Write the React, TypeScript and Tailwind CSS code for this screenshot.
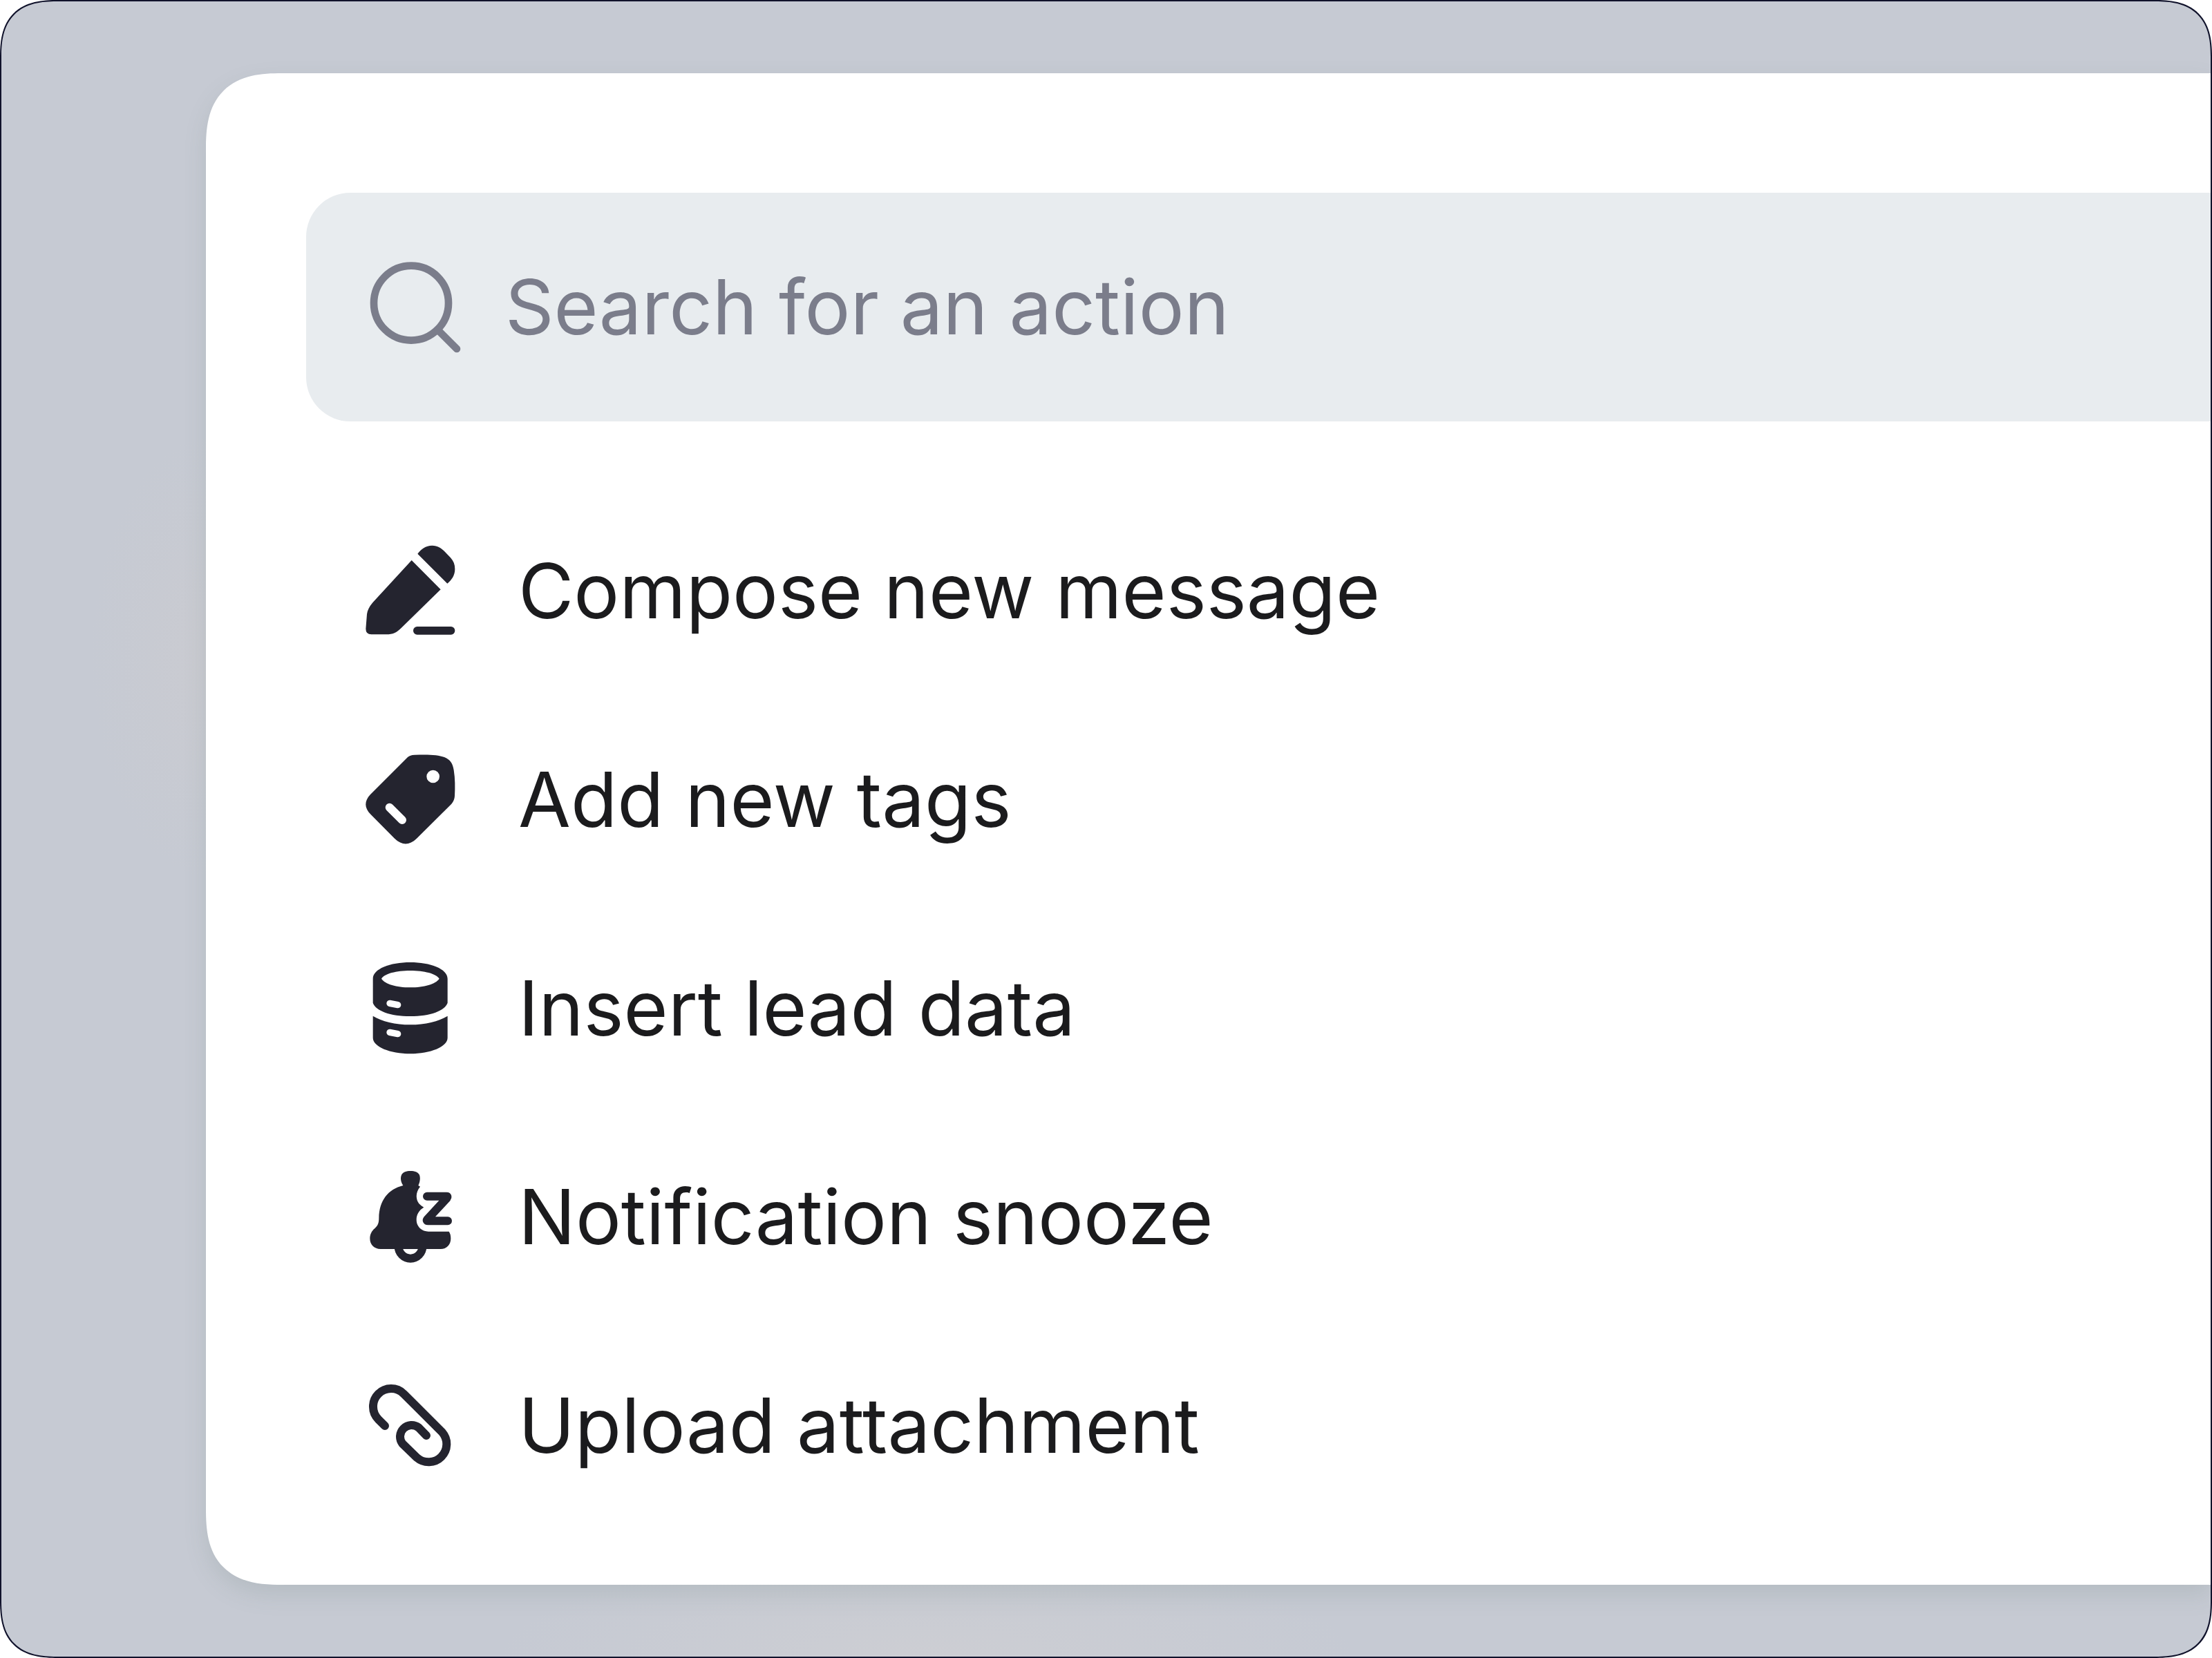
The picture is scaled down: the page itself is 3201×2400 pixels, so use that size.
import type { ReactNode } from 'react'

type Action = {
  label: string
  icon: ReactNode
}

function Icon({ children }: { children: ReactNode }) {
  return (
    <svg viewBox="0 0 432 432" className="size-36 shrink-0" fill="currentColor" aria-hidden="true">
      {children}
    </svg>
  )
}

function SearchIcon() {
  return (
    <Icon>
      <g fill="none" stroke="currentColor">
        <circle cx="198" cy="197" r="162" strokeWidth="32" />
        <path d="M315 315L396 396" strokeWidth="32" strokeLinecap="round" />
      </g>
    </Icon>
  )
}

function PencilIcon() {
  return (
    <Icon>
      <path d="M221 84L347 211L176 378C156 398 139 406 112 406H46Q22 406 22 382L27 318Q30 294 52 268Z" />
      <path d="M247 56C262 36 282 20 310 20C334 20 350 31 364 46L390 73C403 87 409 103 409 122C409 150 394 170 376 185Z" />
      <rect x="228" y="372" width="181" height="35" rx="17" />
    </Icon>
  )
}

function TagIcon() {
  return (
    <Icon>
      <path d="M204 33Q214 24 234 23C292 21 335 22 363 33C390 44 399 61 404 89C410 125 410 165 408 202Q407 222 394 236L243 386C210 417 180 417 147 386L43 281C15 253 15 224 42 195Z" />
      <circle cx="314" cy="117" r="28" fill="white" />
      <path d="M125 251L180 306" stroke="white" strokeWidth="36" strokeLinecap="round" />
    </Icon>
  )
}

function DatabaseIcon() {
  return (
    <Icon>
      <path
        fillRule="evenodd"
        d="M53 89C53 46 128 18 215 18S377 46 377 89V194C366 228 302 252 215 252S64 228 53 194ZM90 89C104 67 154 54 215 54S327 67 341 89C325 113 275 127 215 127S106 113 90 89Z"
      />
      <path d="M53 251C92 275 150 289 215 289S338 275 377 251V346C377 385 303 415 215 415S53 385 53 346Z" />
      <path d="M126 196L161 203M126 322L161 329" stroke="white" strokeWidth="28" strokeLinecap="round" />
    </Icon>
  )
}

function BellSnoozeIcon() {
  return (
    <Icon>
      <path d="M184 81C174 66 171 48 177 35C184 23 198 18 216 18S248 23 255 35C260 49 257 66 250 81L258 86C239 109 237 138 253 160Q263 171 274 176C252 189 242 208 242 230C242 259 265 281 294 281H383C389 289 391 299 391 311C391 338 373 357 347 357H86C59 357 40 338 40 312C40 293 48 278 62 266C75 254 79 244 79 222C80 147 119 97 184 81Z" />
      <g fill="none" stroke="currentColor" strokeWidth="36">
        <path d="M164 346A52 52 0 0 0 268 346" />
        <path d="M288 128H372Q380 128 374 136L289 228Q284 235 292 235H378" strokeLinecap="round" strokeLinejoin="round" />
      </g>
    </Icon>
  )
}

function PaperclipIcon() {
  return (
    <Icon>
      <path
        d="M105 219L77 191A78 78 0 0 1 187 80L354 247A78 78 0 0 1 244 357L181 296A50 50 0 0 1 251 226L285 261"
        fill="none"
        stroke="currentColor"
        strokeWidth="36"
        strokeLinecap="round"
      />
    </Icon>
  )
}

const actions: Action[] = [
  { label: 'Compose new message', icon: <PencilIcon /> },
  { label: 'Add new tags', icon: <TagIcon /> },
  { label: 'Insert lead data', icon: <DatabaseIcon /> },
  { label: 'Notification snooze', icon: <BellSnoozeIcon /> },
  { label: 'Upload attachment', icon: <PaperclipIcon /> },
]

export default function App() {
  return (
    <div className="min-h-screen bg-white font-['Inter',sans-serif]">
      <main className="flex min-h-screen flex-col overflow-hidden rounded-[84px] border-2 border-[#10122b] bg-[#c6cad3] bg-[radial-gradient(170px_320px_at_300px_950px,#cacbd1,transparent),radial-gradient(620px_160px_at_1340px_2400px,#cdced3,transparent)] pt-[104px] pb-[104px] pl-[296px] [corner-shape:superellipse(1.4)]">
        <section className="flex-1 rounded-l-[110px] bg-white pt-[173px] pb-[80px] shadow-[0_14px_32px_rgba(105,125,120,0.18)] [corner-shape:superellipse(1.4)]">
          <label className="ml-[145px] flex h-[331px] items-center gap-[58px] rounded-l-[64px] bg-[#e8ecef] pl-[86px] text-[#7b7d8b]">
            <SearchIcon />
            <input
              type="text"
              aria-label="Search for an action"
              placeholder="Search for an action"
              className="h-40 min-w-0 flex-1 bg-transparent text-[110px] outline-none placeholder:text-[#7b7d8b]"
            />
          </label>
          <ul className="mt-[94px] ml-[145px]">
            {actions.map((action) => (
              <li key={action.label}>
                <button type="button" className="flex h-[302px] w-full items-center gap-[84px] pl-[79px] text-left text-[#24242f]">
                  {action.icon}
                  <span className="text-[110px] leading-none whitespace-nowrap text-[#1b1b1d]">{action.label}</span>
                </button>
              </li>
            ))}
          </ul>
        </section>
      </main>
    </div>
  )
}
